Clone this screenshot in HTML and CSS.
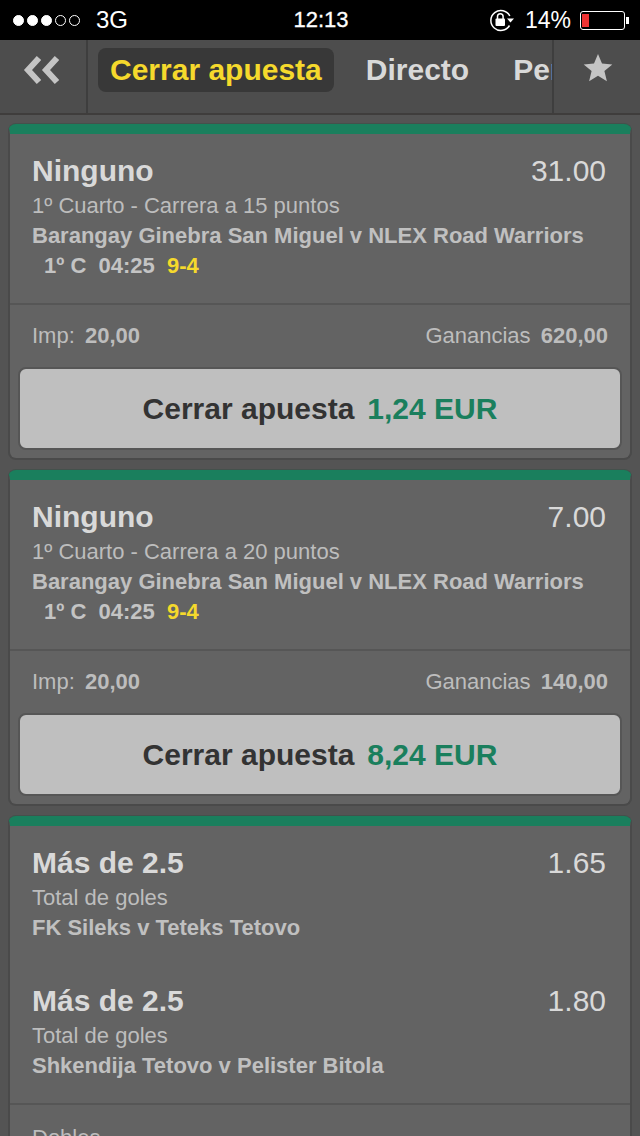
FILE: index.html
```html
<!DOCTYPE html>
<html lang="es">
<head>
    <meta charset="UTF-8">
    <title>Cerrar apuesta</title>
    <link rel="stylesheet" href="styles.css">
</head>
<body>
    <div class="statusBar">
        <div class="statusLeft">
            <span class="dot on"></span><span class="dot on"></span><span class="dot on"></span><span class="dot"></span><span class="dot"></span>
            <span class="carrier">3G</span>
        </div>
        <div class="clock">12:13</div>
        <div class="statusRight">
            <svg class="lockIcon" width="24" height="24" viewBox="0 0 24 24">
                <path d="M19.500 17.500A10 10 0 1 1 19.800 8" fill="none" stroke="#fff" stroke-width="1.500"/>
                <path d="M17 10.500h7l-3.500 4z" fill="#fff"/>
                <rect x="5.500" y="10.500" width="9.500" height="7.500" rx="1" fill="#fff"/>
                <path d="M7.500 11V8.500a2.800 2.800 0 0 1 5.600 0V11" fill="none" stroke="#fff" stroke-width="1.500"/>
            </svg>
            <span class="percent">14%</span>
            <div class="battery"><div class="batteryLevel"></div></div>
            <div class="batteryTip"></div>
        </div>
    </div>

    <div class="nav">
        <div class="navBack">
            <svg width="40" height="32" viewBox="0 0 40 32">
                <path d="M17 4L6 16l11 12M35 4L24 16l11 12" fill="none" stroke="#c4c4c4" stroke-width="6"/>
            </svg>
        </div>
        <div class="tabs">
            <div class="tab active">Cerrar apuesta</div>
            <div class="tab">Directo</div>
            <div class="tab">Pendientes</div>
        </div>
        <div class="navStar">
            <svg width="30" height="30" viewBox="0 0 30 30">
                <path d="M15 1l4 9.600 10.300.8-7.900 6.700 2.500 10.100L15 22.700l-8.900 5.500 2.500-10.100L.7 11.400 11 10.600z" fill="#c4c4c4"/>
            </svg>
        </div>
    </div>

    <div class="content">
        <div class="card">
            <div class="section">
                <div class="titleRow"><span class="title">Ninguno</span><span class="odds">31.00</span></div>
                <div class="market">1º Cuarto - Carrera a 15 puntos</div>
                <div class="match">Barangay Ginebra San Miguel v NLEX Road Warriors</div>
                <div class="live">1º C&nbsp; 04:25&nbsp; <span class="score">9-4</span></div>
            </div>
            <div class="stakeRow">
                <div>Imp: <b>20,00</b></div>
                <div>Ganancias <b>620,00</b></div>
            </div>
            <div class="closeBtn">Cerrar apuesta <span class="amount">1,24 EUR</span></div>
        </div>

        <div class="card">
            <div class="section">
                <div class="titleRow"><span class="title">Ninguno</span><span class="odds">7.00</span></div>
                <div class="market">1º Cuarto - Carrera a 20 puntos</div>
                <div class="match">Barangay Ginebra San Miguel v NLEX Road Warriors</div>
                <div class="live">1º C&nbsp; 04:25&nbsp; <span class="score">9-4</span></div>
            </div>
            <div class="stakeRow">
                <div>Imp: <b>20,00</b></div>
                <div>Ganancias <b>140,00</b></div>
            </div>
            <div class="closeBtn">Cerrar apuesta <span class="amount">8,24 EUR</span></div>
        </div>

        <div class="card">
            <div class="section">
                <div class="selection">
                    <div class="titleRow"><span class="title">Más de 2.5</span><span class="odds">1.65</span></div>
                    <div class="market">Total de goles</div>
                    <div class="match">FK Sileks v Teteks Tetovo</div>
                </div>
                <div class="selection">
                    <div class="titleRow"><span class="title">Más de 2.5</span><span class="odds">1.80</span></div>
                    <div class="market">Total de goles</div>
                    <div class="match">Shkendija Tetovo v Pelister Bitola</div>
                </div>
            </div>
            <div class="betType">Dobles</div>
        </div>
    </div>
</body>
</html>
```

FILE: styles.css
```css
* {
    margin: 0;
    padding: 0;
    box-sizing: border-box;
}

html, body {
    height: 1136px;
    overflow: hidden;
}

body {
    background: #545454;
    font-family: "Liberation Sans", Arial, sans-serif;
    color: #c4c4c4;
}

.statusBar {
    height: 40px;
    background: #000;
    color: #fff;
    display: flex;
    align-items: center;
    justify-content: space-between;
    padding: 0 11px 0 13px;
}

.statusLeft {
    display: flex;
    align-items: center;
    gap: 3px;
    width: 200px;
}

.dot {
    width: 11px;
    height: 11px;
    border-radius: 50%;
    border: 1px solid #fff;
}

.dot.on {
    background: #fff;
}

.carrier {
    font-size: 24px;
    margin-left: 13px;
}

.clock {
    font-size: 22px;
    -webkit-text-stroke: .3px #fff;
}

.statusRight {
    display: flex;
    align-items: center;
    width: 200px;
    justify-content: flex-end;
}

.lockIcon {
    margin-right: 11px;
}

.percent {
    font-size: 23px;
    margin-right: 9px;
    white-space: nowrap;
}

.battery {
    width: 45px;
    height: 19px;
    border: 1px solid #fff;
    border-radius: 3px;
    padding: 2px 1px;
}

.batteryLevel {
    width: 7px;
    height: 100%;
    background: #ee3333;
}

.batteryTip {
    width: 3px;
    height: 7px;
    background: #fff;
    margin-left: 1px;
}

.nav {
    height: 75px;
    background: #4d4d4d;
    border-bottom: 2px solid #3f3d3c;
    display: flex;
}

.navBack {
    width: 88px;
    border-right: 2px solid #3e3e3e;
    padding: 14px 0 0 22px;
}

.tabs {
    flex: 1;
    display: flex;
    overflow: hidden;
    align-items: flex-start;
    padding-top: 8px;
    padding-left: 10px;
    gap: 20px;
    min-width: 0;
}

.tab {
    font-size: 30px;
    font-weight: bold;
    color: #d9d9d9;
    height: 44px;
    line-height: 43px;
    padding: 0 12px;
    white-space: nowrap;
}

.tab.active {
    color: #f5d92c;
    background: #383838;
    border-radius: 8px;
}

.navStar {
    width: 88px;
    border-left: 2px solid #3e3e3e;
    padding: 13px 0 0 29px;
}

.content {
    padding: 9px 8px 0;
    display: flex;
    flex-direction: column;
    gap: 10px;
}

.card {
    background: #636363;
    border: 2px solid #4a4a4a;
    border-top: 10px solid #1a7f5d;
    border-radius: 8px;
    box-shadow: 0 -1px 0 #44514c;
    flex-shrink: 0;
}

.section {
    padding: 20px 22px 22px;
    border-bottom: 2px solid #565656;
}

.titleRow {
    display: flex;
    justify-content: space-between;
    align-items: center;
    height: 34px;
}

.title {
    font-size: 30px;
    font-weight: bold;
    color: #d9d9d9;
}

.odds {
    font-size: 30px;
    color: #d9d9d9;
    margin-right: 2px;
}

.market {
    font-size: 22px;
    line-height: 30px;
    margin-top: 3px;
    color: #bdbdbd;
}

.match {
    font-size: 22px;
    line-height: 30px;
    font-weight: bold;
    color: #c0c0c0;
}

.live {
    font-size: 22px;
    line-height: 30px;
    font-weight: bold;
    padding-left: 12px;
}

.score {
    color: #f5d92c;
}

.stakeRow {
    height: 62px;
    display: flex;
    justify-content: space-between;
    align-items: center;
    padding: 0 22px;
    font-size: 22px;
    color: #bdbdbd;
}

.stakeRow b {
    margin-left: 4px;
}

.closeBtn {
    height: 83px;
    margin: 0 8px 8px;
    padding-top: 1px;
    background: #bfbfbf;
    border: 2px solid #565656;
    border-radius: 8px;
    font-size: 30px;
    font-weight: bold;
    color: #333;
    display: flex;
    align-items: center;
    justify-content: center;
}

.amount {
    color: #1a7f5d;
    margin-left: 13px;
}

.selection + .selection {
    margin-top: 41px;
}

.betType {
    font-size: 22px;
    line-height: 30px;
    padding: 18px 22px;
    color: #bdbdbd;
}
```
